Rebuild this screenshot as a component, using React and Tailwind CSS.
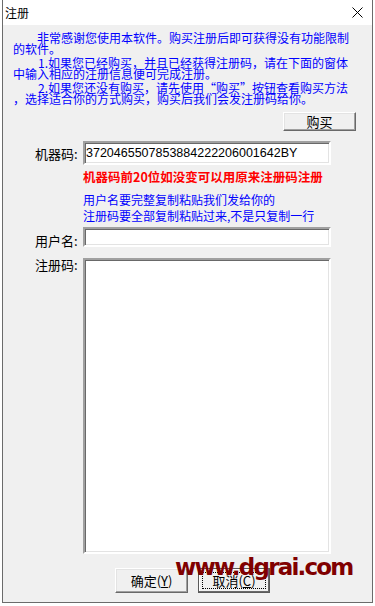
import React from "react";

const cjk = { fontFamily: '"Noto Sans CJK SC", "Noto Sans", sans-serif' };

function Btn({ children, className = "" }) {
  return (
    <div
      className={
        "flex items-center justify-center bg-[#f0f0f0] border-t border-l border-t-white border-l-white border-r border-b border-r-[#696969] border-b-[#696969] shadow-[inset_-1px_-1px_0_#a0a0a0,inset_1px_1px_0_#e3e3e3] text-[13px] leading-[13px] text-black " +
        className
      }
      style={cjk}
    >
      {children}
    </div>
  );
}

function Sunken({ className = "", children }) {
  return (
    <div
      className={
        "bg-white border-2 border-t-[#a0a0a0] border-l-[#a0a0a0] border-r-white border-b-white shadow-[inset_1px_1px_0_#696969,inset_-1px_-1px_0_#e3e3e3] " +
        className
      }
    >
      {children}
    </div>
  );
}

export default function App() {
  return (
    <div className="w-[375px] h-[606px] bg-white overflow-hidden" style={cjk}>
      <div className="relative ml-[2px] w-[371px] h-[603px] border-l border-r border-b border-[#6b6b6b] flex flex-col">
        {/* title bar */}
        <div className="h-[25px] bg-white flex items-center justify-between pl-[2px] pr-[9px]">
          <span className="text-[12px] leading-[12px] text-black">注册</span>
          <svg width="11" height="11" viewBox="0 0 11 11" className="block">
            <path d="M0.5 0.5 L10.5 10.5 M10.5 0.5 L0.5 10.5" stroke="#000" strokeWidth="1" fill="none" />
          </svg>
        </div>

        {/* body */}
        <div className="flex-1 bg-[#f0f0f0] flex flex-col">
          <div className="pt-[7px] pl-[10px] text-[12px] leading-[11px] text-[#0000ff] whitespace-nowrap">
            <div className="pl-[24px]">非常感谢您使用本软件。购买注册后即可获得没有功能限制</div>
            <div>的软件。</div>
            <div className="pl-[25px] mt-[3px]">1.如果您已经购买，并且已经获得注册码，请在下面的窗体</div>
            <div>中输入相应的注册信息便可完成注册。</div>
            <div className="pl-[25px] mt-[3px]">
              2.如果您还没有购买，请先使用
              <span className="inline-block w-[12px] text-right">“</span>
              购买
              <span className="inline-block w-[12px] text-left">”</span>
              按钮查看购买方法
            </div>
            <div>，选择适合你的方式购买，购买后我们会发注册码给你。</div>
          </div>

          <div className="flex justify-end pr-[16px] mt-[8px]">
            <Btn className="w-[73px] h-[19px]">购买</Btn>
          </div>

          {/* machine code */}
          <div className="flex items-center pl-[32px] mt-[10px]">
            <div className="w-[48px] text-[13px] leading-[13px] text-black">机器码:</div>
            <Sunken className="w-[248px] h-[24px] flex items-center pl-[1px]">
              <span
                className="text-[12.5px] leading-[14px] text-black"
                style={{ fontFamily: '"Liberation Sans", Arial, sans-serif' }}
              >
                3720465507853884222206001642BY
              </span>
            </Sunken>
          </div>

          <div className="pl-[80px] mt-[5px] text-[12.5px] leading-[13px] font-bold text-[#ff0000] whitespace-nowrap">
            机器码前20位如没变可以用原来注册码注册
          </div>

          <div className="pl-[80px] mt-[9px] text-[12px] leading-[16px] text-[#0000ff] whitespace-nowrap">
            <div>用户名要完整复制粘贴我们发给你的</div>
            <div>注册码要全部复制粘贴过来,不是只复制一行</div>
          </div>

          {/* user name */}
          <div className="flex items-start pl-[32px] mt-[3px]">
            <div className="w-[48px] pt-[7px] text-[13px] leading-[13px] text-black">用户名:</div>
            <Sunken className="w-[248px] h-[20px]" />
          </div>

          {/* reg code */}
          <div className="flex items-start pl-[32px] mt-[11px]">
            <div className="w-[48px] text-[13px] leading-[13px] text-black">注册码:</div>
            <Sunken className="w-[248px] h-[296px]" />
          </div>

          {/* buttons */}
          <div className="flex pl-[112px] gap-[10px] mt-[14px]">
            <Btn className="w-[73px] h-[25px]">
              确定(<span className="underline">Y</span>)
            </Btn>
            <div className="w-[72px] h-[25px] bg-[#f0f0f0] border border-[#5a5a5a] shadow-[inset_-1px_-1px_0_#696969,inset_1px_1px_0_#ffffff] p-[3px]">
              <div
                className="w-full h-full border border-dotted border-black flex items-center justify-center text-[13px] leading-[13px] text-black"
                style={cjk}
              >
                取消(<span className="underline">C</span>)
              </div>
            </div>
          </div>
        </div>

        {/* watermark */}
        <div
          className="absolute left-[172px] top-[552px] text-[23px] leading-[30px] font-bold text-[#800000] tracking-[-1.8px] whitespace-nowrap"
          style={{ fontFamily: '"DejaVu Sans", Verdana, sans-serif' }}
        >
          www.dgrai.com
        </div>
      </div>
    </div>
  );
}
